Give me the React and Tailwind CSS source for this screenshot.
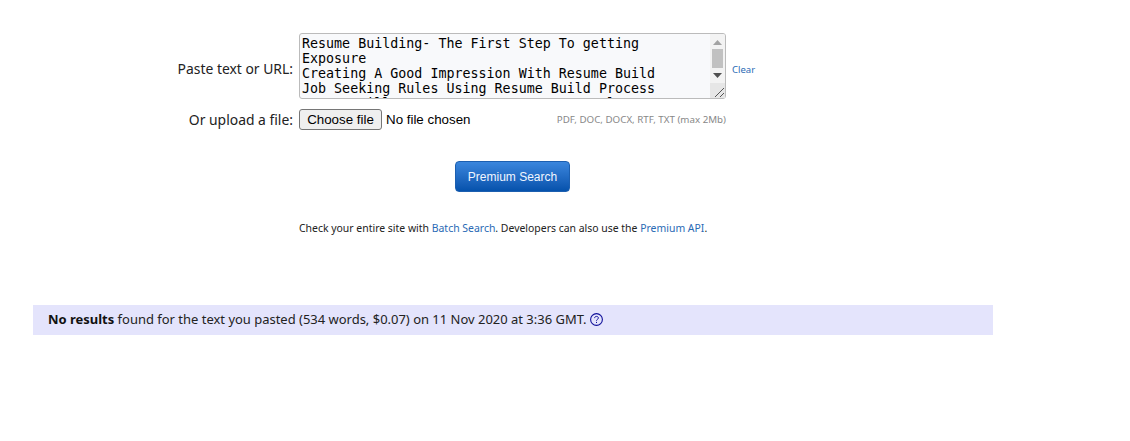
export default function App() {
  const text = `Resume Building- The First Step To getting Exposure
Creating A Good Impression With Resume Build
Job Seeking Rules Using Resume Build Process
Resume Will Improve Your Success Cancel
Writing Resume That Gets You The Job
Tips For Resume Building And Formatting`;
  return (
    <div className="min-h-[441px] bg-white text-black font-['Noto_Sans','Open_Sans',sans-serif]">
      <div className="pt-[33px]">
        <div className="flex items-center">
          <label className="w-[293px] pt-[6px] text-right text-[13.9px] leading-[20px] text-[#222]">Paste text or URL:</label>
          <div className="relative ml-[6px] w-[427px] h-[66px]">
            <textarea
              readOnly
              defaultValue={text}
              className="block w-full h-full overflow-hidden resize-none bg-[#f8f9fb] border border-[#bbb] rounded-[3px] pl-[2px] pr-[17px] py-[2px] font-['DejaVu_Sans_Mono',monospace] text-[13.33px] leading-[15px] text-black outline-none"
            />
            <div className="absolute right-[1px] top-[1px] bottom-[1px] w-[15px] bg-[#f3f3f3] rounded-r-[2px] flex flex-col items-center">
              <svg className="mt-[6px]" width="9" height="5" viewBox="0 0 9 5"><path d="M4.5 0L9 5H0z" fill="#a3a3a3" /></svg>
              <div className="mt-[4px] w-[11px] h-[19px] bg-[#c1c1c1]" />
              <svg className="mt-[5px]" width="9" height="5" viewBox="0 0 9 5"><path d="M0 0h9L4.5 5z" fill="#505050" /></svg>
              <div className="mt-auto w-[15px] h-[15px] bg-[#e6e6e6] flex items-end justify-end">
                <svg width="13" height="13" viewBox="0 0 13 13" stroke="#555" strokeWidth="1" fill="none">
                  <path d="M3 12L12 3" />
                  <path d="M8 12L12 8" />
                </svg>
              </div>
            </div>
          </div>
          <a className="ml-[6px] pt-[8px] text-[9.5px] leading-[14px] text-[#2a6ab5]">Clear</a>
        </div>
        <div className="flex items-center mt-[10px] h-[22px]">
          <label className="w-[293px] text-right text-[13.9px] leading-[20px] text-[#222]">Or upload a file:</label>
          <div className="ml-[6px] w-[427px] flex items-center justify-between">
            <div className="flex items-start h-[22px] font-['Liberation_Sans',sans-serif] text-[13.33px] text-black">
              <button className="w-[83px] h-[21px] border border-[#767676] rounded-[3px] bg-[#efefef] leading-[15px]">Choose file</button>
              <span className="ml-[4px] leading-[21px]">No file chosen</span>
            </div>
            <span className="text-[9.75px] leading-[14px] text-[#888]">PDF, DOC, DOCX, RTF, TXT (max 2Mb)</span>
          </div>
        </div>
        <div className="flex justify-center mt-[30px] w-[1025px]">
          <button className="w-[115px] h-[31px] rounded-[4px] border border-[#1c5fb0] bg-gradient-to-b from-[#3a86dd] to-[#0552ac] font-['Liberation_Sans',sans-serif] text-[12px] text-[#f0f6ff]">
            Premium Search
          </button>
        </div>
        <p className="mt-[28px] ml-[299px] text-[10.45px] leading-[16px] text-[#222]">
          Check your entire site with <a className="text-[#2a6ab5]">Batch Search</a>. Developers can also use the <a className="text-[#2a6ab5]">Premium API</a>.
        </p>
      </div>
      <div className="mt-[69px] ml-[33px] w-[960px] h-[30px] bg-[#e4e4fc] pl-[15px] flex items-center text-[12.97px] text-[#222]">
        <span><b className="font-bold text-[#111]">No results</b> found for the text you pasted (534 words, $0.07) on 11 Nov 2020 at 3:36 GMT.</span>
        <svg className="ml-[3px] mb-[1px]" width="13" height="13" viewBox="0 0 13 13" fill="none" stroke="#10109a">
          <circle cx="6.5" cy="6.5" r="5.9" strokeWidth="1.1" />
          <path d="M4.6 5.1c0-1.1.9-1.7 1.9-1.7s1.9.6 1.9 1.6c0 1.3-1.9 1.4-1.9 2.7" strokeWidth="1" />
          <path d="M6.5 8.9v1.1" strokeWidth="1" />
        </svg>
      </div>
    </div>
  );
}
